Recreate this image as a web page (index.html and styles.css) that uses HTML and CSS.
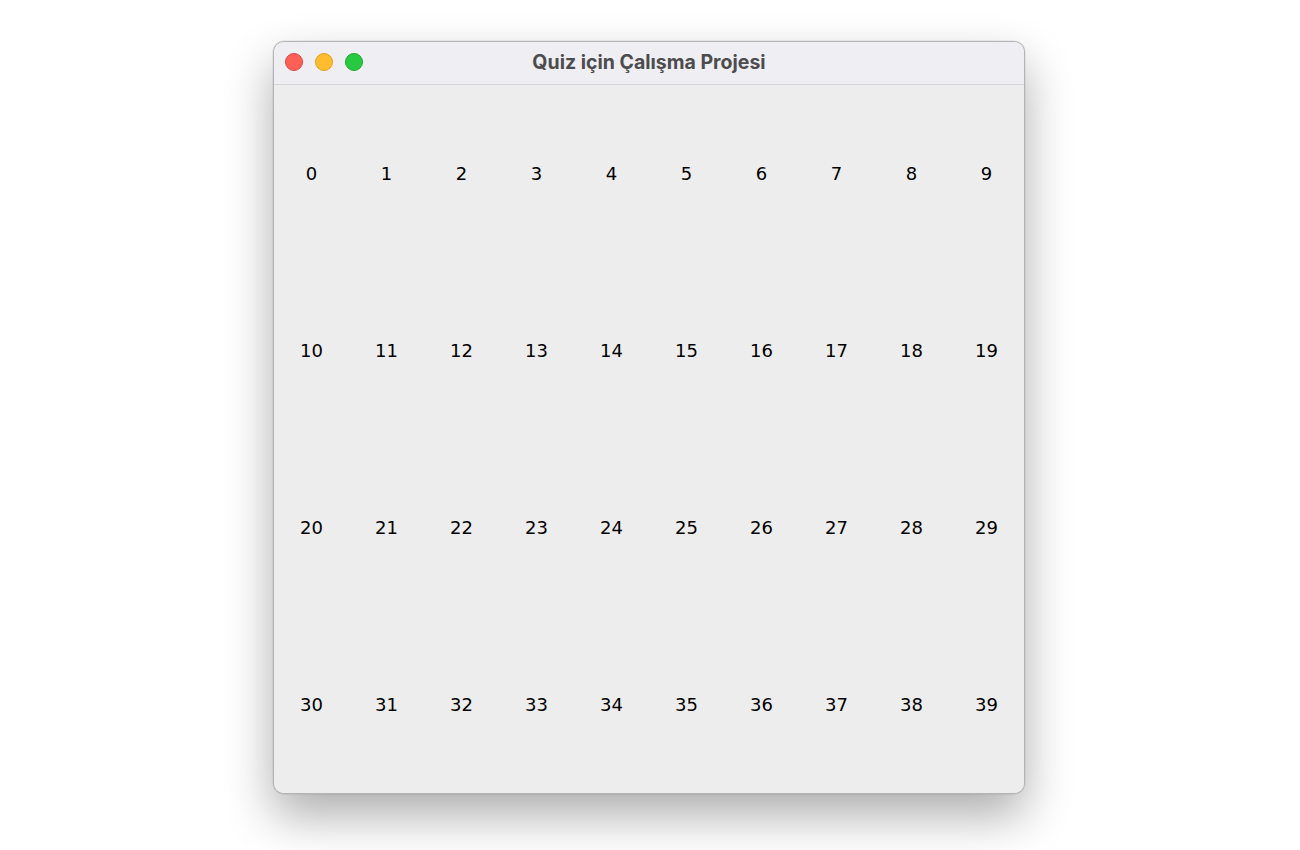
FILE: index.html
```html
<!DOCTYPE html>
<html lang="tr">
<head>
<meta charset="utf-8">
<title>Quiz için Çalışma Projesi</title>
<link rel="stylesheet" href="styles.css">
</head>
<body>
<div class="page">
  <div class="window">
    <div class="titlebar">
      <div class="lights">
        <span class="light red"></span>
        <span class="light yellow"></span>
        <span class="light green"></span>
      </div>
      <div class="title">Quiz için Çalışma Projesi</div>
    </div>
    <div class="grid">
      <span>0</span><span>1</span><span>2</span><span>3</span><span>4</span><span>5</span><span>6</span><span>7</span><span>8</span><span>9</span>
      <span>10</span><span>11</span><span>12</span><span>13</span><span>14</span><span>15</span><span>16</span><span>17</span><span>18</span><span>19</span>
      <span>20</span><span>21</span><span>22</span><span>23</span><span>24</span><span>25</span><span>26</span><span>27</span><span>28</span><span>29</span>
      <span>30</span><span>31</span><span>32</span><span>33</span><span>34</span><span>35</span><span>36</span><span>37</span><span>38</span><span>39</span>
    </div>
  </div>
</div>
</body>
</html>
```

FILE: styles.css
```css
html, body {
  margin: 0;
  padding: 0;
  background: #ffffff;
}
.page {
  width: 1300px;
  height: 850px;
  padding-top: 41px;
  padding-left: 273px;
  box-sizing: border-box;
}
.window {
  width: 752px;
  height: 753px;
  box-sizing: border-box;
  border: 1px solid #b4b4b4;
  border-radius: 11px;
  overflow: hidden;
  background: #eeeded;
  box-shadow: 0 22px 48px rgba(0,0,0,0.32), 0 0 0 0.5px rgba(0,0,0,0.1);
  display: flex;
  flex-direction: column;
}
.titlebar {
  height: 43px;
  flex: none;
  box-sizing: border-box;
  background: #efeef2;
  border-bottom: 1px solid #d6d6d8;
  display: flex;
  align-items: center;
  position: relative;
}
.lights {
  display: flex;
  gap: 12px;
  padding-left: 11px;
  margin-top: -2px;
}
.light {
  width: 18px;
  height: 18px;
  border-radius: 50%;
  box-sizing: border-box;
}
.red { background: #fe5f57; border: 0.5px solid #e2463f; }
.yellow { background: #febc2e; border: 0.5px solid #e1a116; }
.green { background: #28c840; border: 0.5px solid #1aab29; }
.title {
  position: absolute;
  left: 0;
  right: 0;
  top: 0;
  bottom: 0;
  display: flex;
  align-items: center;
  justify-content: center;
  margin-top: -2px;
  font-family: Inter, "Noto Sans", sans-serif;
  font-weight: 700;
  font-size: 19.5px;
  color: #4c4c4f;
}
.grid {
  flex: 1;
  display: grid;
  grid-template-columns: repeat(10, 1fr);
  grid-template-rows: repeat(4, 1fr);
  background: #eeeded;
  font-family: "DejaVu Sans", sans-serif;
  font-size: 18px;
  color: #000;
}
.grid span {
  display: flex;
  align-items: center;
  justify-content: center;
}
```
